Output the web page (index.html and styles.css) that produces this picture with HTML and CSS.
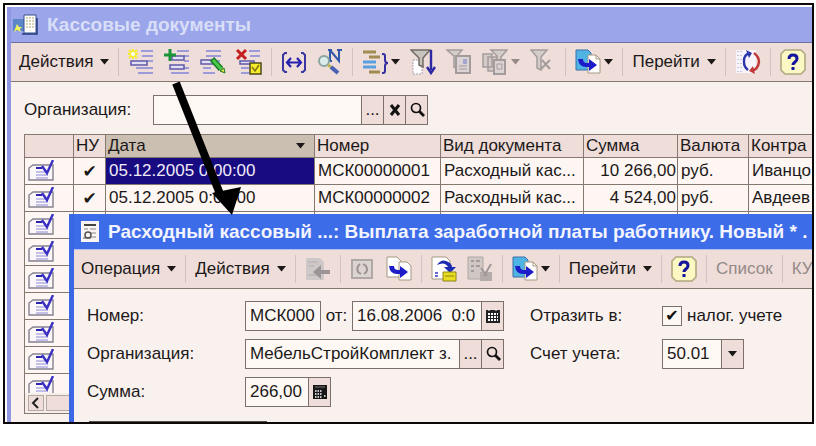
FILE: index.html
```html
<!DOCTYPE html>
<html lang="ru">
<head>
    <meta charset="UTF-8">
    <title>Кассовые документы</title>
    <link rel="stylesheet" href="styles.css">
</head>
<body>
<svg class="sprite">
    <symbol id="i-lines" viewBox="0 0 26 26">
        <path d="M13 2h12M14 7h11M8 19h17M10 24h15M19 12h6" stroke="#9c9ad8" stroke-width="2"/>
        <path d="M3 12h16v4H3z" fill="#e4e0f4" stroke="#5f5aa8" stroke-width="1.5"/>
    </symbol>
    <symbol id="i-row" viewBox="0 0 26 22">
        <path d="M5 5h20v15H1V8z" fill="#fbf6f8" stroke="#85818f" stroke-width="1.4"/>
        <path d="M8 12h12M8 15h12M8 18h12" stroke="#8d8bd8"/>
        <path d="M8 8h6" stroke="#2b23b4" stroke-width="2"/>
        <path d="M14 6l5 7 6-13" fill="none" stroke="#3a30c4" stroke-width="2.4"/>
    </symbol>
    <symbol id="i-go" viewBox="0 0 26 26">
        <path d="M1 1h12l3 3v17H1z" fill="#4fb4e4" stroke="#3c6ea8"/>
        <path d="M13 6h8l4 4v14H13z" fill="#fff" stroke="#a49a80"/>
        <path d="M21 6v4h4" fill="none" stroke="#a49a80"/>
        <path d="M3 10l5 0q0 4 4 4h2v-4l8 6-8 6v-4h-3q-7 0-8-8z" fill="#1c1cc8"/>
    </symbol>
    <symbol id="i-help" viewBox="0 0 26 26">
        <path d="M5 1h16l4 4v16l-4 4H5l-4-4V5z" fill="#fbf8c4" stroke="#b0a880" stroke-width="1.6"/>
        <path d="M9 10q0-4 4-4t4 3.500q0 2-2 3.500t-2 3" fill="none" stroke="#14149c" stroke-width="3"/>
        <path d="M11.500 18h3v3h-3z" fill="#14149c"/>
    </symbol>
    <symbol id="i-find" viewBox="0 0 16 16">
        <circle cx="7" cy="6" r="4.500" fill="none" stroke="#111" stroke-width="1.700"/>
        <path d="M10 9l5 5" stroke="#111" stroke-width="2.800"/>
    </symbol>
    <symbol id="i-down" viewBox="0 0 9 6">
        <path d="M0 0h9L4.500 5.500z" fill="currentColor"/>
    </symbol>
</svg>

<div class="frame">
    <div class="journal">
        <div class="title">
            <svg class="title-icon" viewBox="0 0 26 22">
                <path d="M0 5h12v12H0z" fill="#5c86c8"/>
                <path d="M4 10l2 3 3 0-2 2 1 3-4-2-3 2 1-3z" fill="#f0f060"/>
                <path d="M11 1h12v18H11z" fill="#fff" stroke="#34508c"/>
                <path d="M13 4h8M13 7h8M13 10h8M13 13h8" stroke="#b0a468" stroke-dasharray="2 1"/>
                <path d="M9 20h15V4" fill="none" stroke="#283c80" stroke-width="1.500"/>
            </svg>
            <h1>Кассовые документы</h1>
        </div>

        <div class="toolbar">
            <button class="menu">Действия<svg class="down"><use href="#i-down"/></svg></button>
            <span class="sep"></span>
            <button title="Добавить"><svg viewBox="0 0 26 26"><use href="#i-lines"/><path d="M5 0v10M0 5h10M1 1l8 8M9 1L1 9" stroke="#f4ec28" stroke-width="2"/><circle cx="5" cy="5" r="2" fill="#fff"/></svg></button>
            <button title="Скопировать"><svg viewBox="0 0 26 26"><path d="M13 2h12M20 12h5M7 24h18M20 7h5M20 19h5" stroke="#9c9ad8" stroke-width="2"/><path d="M8 7h12v4H8zM6 16h14v4H6z" fill="#e4e0f4" stroke="#5f5aa8" stroke-width="1.500"/><path d="M6 0v12M0 6h12" stroke="#1c9438" stroke-width="3"/></svg></button>
            <button title="Изменить"><svg viewBox="0 0 26 26"><path d="M6 2h15M6 7h15M3 19h8M3 24h12M14 12h6" stroke="#9c9ad8" stroke-width="2"/><path d="M1 11h13v4H1z" fill="#e4e0f4" stroke="#5f5aa8" stroke-width="1.500"/><path d="M12 10l9 10" stroke="#1c7c28" stroke-width="6"/><path d="M13 11l9 10" stroke="#4cc848" stroke-width="3"/><path d="M20 22l4-3 1 5z" fill="#e8e040" stroke="#1c7c28"/></svg></button>
            <button title="Пометить на удаление"><svg viewBox="0 0 26 26"><path d="M13 2h11M14 7h10M5 19h8M5 24h8" stroke="#9c9ad8" stroke-width="2"/><path d="M4 12h14v3H4z" fill="#e4e0f4" stroke="#5f5aa8" stroke-width="1.500"/><path d="M1 1l9 9M10 1l-9 9" stroke="#c42020" stroke-width="3"/><path d="M14 14h11v11H14z" fill="#f6ec28" stroke="#4c4818" stroke-width="1.500"/><path d="M16 18l3 4 4-6" fill="none" stroke="#807414" stroke-width="1.500"/></svg></button>
            <span class="sep"></span>
            <button title="Интервал"><svg viewBox="0 0 26 26"><path d="M6 4H4L2 6v15l2 2h2M20 4h2l2 2v15l-2 2h-2" fill="none" stroke="#3a38a0" stroke-width="2"/><path d="M7 13.500h12M10 9l-4 4.500 4 4.500M16 9l4 4.500-4 4.500" fill="none" stroke="#2420b0" stroke-width="2.200"/></svg></button>
            <button title="Найти по номеру"><svg viewBox="0 0 26 26"><path d="M13 12V1l9 11V1M11 1h4M20 1h5M11 12h4" fill="none" stroke="#3058a8" stroke-width="2"/><circle cx="7" cy="12" r="5" fill="#dcecec" stroke="#8ca4a0" stroke-width="2"/><path d="M11 16l3 2" stroke="#c0b454" stroke-width="3"/><path d="M14 18l7 6" stroke="#4860b4" stroke-width="4"/></svg></button>
            <span class="sep"></span>
            <button class="drop-menu" title="Отборы"><svg viewBox="0 0 26 26"><path d="M1 3h13M7 8h11M7 23h11" stroke="#a08c50" stroke-width="3"/><path d="M1 13h13M1 18h13" stroke="#58a0e0" stroke-width="3"/><path d="M20 5h1q2 0 2 2v4q0 3 3 3-3 0-3 3v5q0 2-2 2h-1" fill="none" stroke="#3430a0" stroke-width="2"/></svg><svg class="down"><use href="#i-down"/></svg></button>
            <button title="Отбор и сортировка"><svg viewBox="0 0 26 26"><path d="M3 11h9v14H3z" fill="#fff" stroke="#a8a0b8" stroke-dasharray="2 1"/><path d="M1 1h19l-7 8v9l-4-2V9z" fill="#c8c4bc" stroke="#706c64" stroke-width="1.500"/><path d="M21 1v20M17 18l4 6 4-6" fill="none" stroke="#2c28a4" stroke-width="2.400"/></svg></button>
            <button title="Отбор по значению"><svg viewBox="0 0 26 26"><path d="M1 1h15l-5 6v13l-3-2V7z" fill="#d4ccc8" stroke="#a49c9c" stroke-width="1.500"/><path d="M10 7h14v17H10z" fill="#dcd4d4" stroke="#a49c9c" stroke-width="2"/><path d="M13 17h8M13 20h8" stroke="#a49c9c"/><path d="M17 10h4v5h-4z" fill="#a4a4d0"/></svg></button>
            <button class="drop-menu off" title="История отборов"><svg viewBox="0 0 26 26"><path d="M1 5h9v13H1zM6 8h9v14H6z" fill="#d4ccc8" stroke="#a49c9c" stroke-width="1.500"/><path d="M9 1h16l-6 7v6l-4-2V7z" fill="#d4ccc8" stroke="#a49c9c" stroke-width="1.500"/><path d="M12 11h11v14H12z" fill="#dcd4d4" stroke="#a49c9c" stroke-width="2"/><path d="M15 15h5v5h-5z" fill="none" stroke="#a49c9c"/></svg><svg class="down"><use href="#i-down"/></svg></button>
            <button title="Отключить отбор"><svg viewBox="0 0 26 26"><path d="M1 1h16l-6 7v13l-4-2V8z" fill="#d4ccc8" stroke="#a49c9c" stroke-width="1.500"/><path d="M12 11l8 9M20 11l-9 9" stroke="#a49c9c" stroke-width="2"/></svg></button>
            <span class="sep"></span>
            <button class="drop-menu" title="Ввести на основании"><svg><use href="#i-go"/></svg><svg class="down"><use href="#i-down"/></svg></button>
            <span class="sep"></span>
            <button class="menu">Перейти<svg class="down"><use href="#i-down"/></svg></button>
            <span class="sep"></span>
            <button title="Обновить"><svg viewBox="0 0 26 26"><path d="M1 1h20v23H1z" fill="#f8f4fc"/><path d="M3 2v22M6 2v22" stroke="#9c98b0" stroke-dasharray="1 3"/><path d="M15 4q-7 2-6 9 0 5 4 8" fill="none" stroke="#2c38a8" stroke-width="2.400"/><path d="M11 1l6 3-3 5z" fill="#2c38a8"/><path d="M19 4q5 4 5 9-1 7-7 9" fill="none" stroke="#c03838" stroke-width="2.400"/><path d="M20 25l-6-3 4-5z" fill="#c03838"/></svg></button>
            <span class="sep"></span>
            <button title="Справка"><svg><use href="#i-help"/></svg></button>
        </div>

        <div class="filter">
            <label for="org-filter">Организация:</label>
            <div class="field field-filter">
                <input type="text" id="org-filter">
                <button title="Выбрать">...</button>
                <button title="Очистить"><svg viewBox="0 0 16 16"><path d="M4 3l8 10M12 3L4 13" stroke="#111" stroke-width="3"/></svg></button>
                <button title="Открыть"><svg><use href="#i-find"/></svg></button>
            </div>
        </div>

        <div class="list">
            <div class="list-rows">
                <table>
                    <colgroup>
                        <col class="c-icon"><col class="c-nu"><col class="c-date"><col class="c-num">
                        <col class="c-kind"><col class="c-sum"><col class="c-cur"><col class="c-who">
                    </colgroup>
                    <thead>
                    <tr>
                        <th></th>
                        <th>НУ</th>
                        <th class="sorted"><div>Дата<svg class="down"><use href="#i-down"/></svg></div></th>
                        <th>Номер</th>
                        <th>Вид документа</th>
                        <th>Сумма</th>
                        <th>Валюта</th>
                        <th>Контра</th>
                    </tr>
                    </thead>
                    <tbody>
                    <tr>
                        <td><svg class="row-icon"><use href="#i-row"/></svg></td>
                        <td class="tick">✔</td>
                        <td class="selected">05.12.2005 0:00:00</td>
                        <td>МСК00000001</td>
                        <td>Расходный кас...</td>
                        <td class="money">10 266,00</td>
                        <td>руб.</td>
                        <td>Иванцо</td>
                    </tr>
                    <tr>
                        <td><svg class="row-icon"><use href="#i-row"/></svg></td>
                        <td class="tick">✔</td>
                        <td>05.12.2005 0:00:00</td>
                        <td>МСК00000002</td>
                        <td>Расходный кас...</td>
                        <td class="money">4 524,00</td>
                        <td>руб.</td>
                        <td>Авдеев</td>
                    </tr>
                    <tr><td><svg class="row-icon"><use href="#i-row"/></svg></td><td></td><td></td><td></td><td></td><td></td><td></td><td></td></tr>
                    <tr><td><svg class="row-icon"><use href="#i-row"/></svg></td><td></td><td></td><td></td><td></td><td></td><td></td><td></td></tr>
                    <tr><td><svg class="row-icon"><use href="#i-row"/></svg></td><td></td><td></td><td></td><td></td><td></td><td></td><td></td></tr>
                    <tr><td><svg class="row-icon"><use href="#i-row"/></svg></td><td></td><td></td><td></td><td></td><td></td><td></td><td></td></tr>
                    <tr><td><svg class="row-icon"><use href="#i-row"/></svg></td><td></td><td></td><td></td><td></td><td></td><td></td><td></td></tr>
                    <tr><td><svg class="row-icon"><use href="#i-row"/></svg></td><td></td><td></td><td></td><td></td><td></td><td></td><td></td></tr>
                    <tr><td><svg class="row-icon"><use href="#i-row"/></svg></td><td></td><td></td><td></td><td></td><td></td><td></td><td></td></tr>
                    </tbody>
                </table>
            </div>
            <div class="scroll">
                <button title="Влево"><svg viewBox="0 0 14 14"><path d="M9 2L4 7l5 5" fill="none" stroke="#222" stroke-width="2"/></svg></button>
                <div class="thumb"></div>
            </div>
        </div>
    </div>

    <div class="order">
        <div class="title">
            <svg class="title-icon" viewBox="0 0 18 22">
                <path d="M0 0h18v21H0z" fill="#fbf4f4"/>
                <path d="M3 4h12" stroke="#444" stroke-width="2"/>
                <path d="M3 8h4M9 8h6M10 12h5M10 16h5" stroke="#888"/>
                <circle cx="7" cy="14" r="3" fill="none" stroke="#555" stroke-width="1.500"/>
                <path d="M2 17h8" stroke="#555"/>
            </svg>
            <h2>Расходный кассовый ...: Выплата заработной платы работнику. Новый * .</h2>
        </div>

        <div class="toolbar">
            <button class="menu">Операция<svg class="down"><use href="#i-down"/></svg></button>
            <span class="sep"></span>
            <button class="menu">Действия<svg class="down"><use href="#i-down"/></svg></button>
            <span class="sep"></span>
            <button title="Найти в списке"><svg viewBox="0 0 26 26"><path d="M1 2h14l4 4v18H1z" fill="#cfc8c8"/><path d="M3 6h10M3 10h6M3 19h12" stroke="#b4acac"/><path d="M25 14v4h-9v5l-8-7 8-7v5z" fill="#9c9496"/></svg></button>
            <span class="sep"></span>
            <button title="Перечитать"><svg viewBox="0 0 26 26"><path d="M2 4h20v18H2z" fill="#dcd4d0" stroke="#b0a8a4" stroke-width="2"/><path d="M10 8q-4 3-2 8l3 2M14 18q5-3 2-8l-3-2" fill="none" stroke="#9c9494" stroke-width="2"/></svg></button>
            <button title="Скопировать"><svg viewBox="0 0 26 26"><path d="M1 1h10l4 4v16H1z" fill="#fff" stroke="#a49a80"/><path d="M13 6h8l4 4v14H13z" fill="#fff" stroke="#a49a80"/><path d="M3 10l5 0q0 4 4 4h2v-4l8 6-8 6v-4h-3q-7 0-8-8z" fill="#1c1cc8"/></svg></button>
            <span class="sep"></span>
            <button title="Провести"><svg viewBox="0 0 26 26"><path d="M1 1h14l4 4v18H1z" fill="#fff" stroke="#a49a80"/><path d="M4 17h3M4 20h3" stroke="#6868d8" stroke-width="2"/><path d="M6 9q5-8 13-2 2 2 2 4h4l-6 6-6-6h4q-3-6-11-2z" fill="#1c2cb0"/><path d="M12 16h13v9H12z" fill="#e8dc20" stroke="#8c8418"/><path d="M14 20h9" stroke="#8c8418"/></svg></button>
            <button title="Отменить проведение"><svg viewBox="0 0 26 26"><path d="M1 1h15v22H1z" fill="#d0c8c4" stroke="#b0a8a4"/><path d="M4 5h3M9 5h4M4 10h3M4 15h3M9 10h4" stroke="#a49c9c" stroke-width="2"/><path d="M13 16h12v9H13z" fill="#b4acaa"/><path d="M24 8l-7 12M14 12l6 8" stroke="#a09898" stroke-width="2"/></svg></button>
            <span class="sep"></span>
            <button class="drop-menu" title="Ввести на основании"><svg><use href="#i-go"/></svg><svg class="down"><use href="#i-down"/></svg></button>
            <span class="sep"></span>
            <button class="menu">Перейти<svg class="down"><use href="#i-down"/></svg></button>
            <span class="sep"></span>
            <button title="Справка"><svg><use href="#i-help"/></svg></button>
            <span class="sep"></span>
            <button class="off">Список</button>
            <span class="sep"></span>
            <button class="off">КУ</button>
        </div>

        <form class="form">
            <label for="num">Номер:</label>
            <div class="pair">
                <div class="field field-num"><input type="text" id="num" value="МСК000"></div>
                <label for="date">от:</label>
                <div class="field field-date">
                    <input type="text" id="date" value="16.08.2006  0:0">
                    <button type="button" title="Календарь"><svg viewBox="0 0 16 16"><path d="M1 2h14v13H1z" fill="#222"/><path d="M3 6h10M3 9h10M3 12h10" stroke="#fff" stroke-width="2" stroke-dasharray="2 1"/><path d="M4 1v2M11 1v2" stroke="#fff"/></svg></button>
                </div>
            </div>
            <label for="nalog">Отразить в:</label>
            <div class="check"><input type="checkbox" id="nalog" checked><label for="nalog">налог. учете</label></div>

            <label for="org">Организация:</label>
            <div class="field">
                <input type="text" id="org" value="МебельСтройКомплект з.">
                <button type="button" title="Выбрать">...</button>
                <button type="button" title="Открыть"><svg><use href="#i-find"/></svg></button>
            </div>
            <label for="account">Счет учета:</label>
            <div class="field field-account">
                <select id="account"><option>50.01</option></select>
                <span class="drop"><svg class="down"><use href="#i-down"/></svg></span>
            </div>

            <label for="sum">Сумма:</label>
            <div class="field field-sum">
                <input type="text" id="sum" value="266,00">
                <button type="button" title="Калькулятор"><svg viewBox="0 0 16 16"><path d="M1 1h14v14H1z" fill="#181818"/><path d="M3 3h10" stroke="#777"/><path d="M3 7h7M3 10h7M3 13h7M12 12h2" stroke="#fff" stroke-width="1.500" stroke-dasharray="1.500 1"/></svg></button>
            </div>
        </form>
        <div class="tabs-edge"></div>
    </div>

    <!-- стрелка от кнопки "Скопировать" к новому документу -->
    <svg class="pointer" viewBox="0 0 70 136">
        <path d="M10 3L54 114" stroke="#000" stroke-width="8"/>
        <path d="M46 113l29-6-9 28z"/>
    </svg>
</div>
</body>
</html>
```
FILE: styles.css
```css
*{
    margin: 0;
    padding: 0;
    box-sizing: border-box;
}
body{
    background-color: #fff;
    padding: 3px 2px 0 3px;
    font: 17px/20px "Liberation Sans", Arial, sans-serif;
    color: #1c1818;
}
button, input, select{
    font: inherit;
    color: inherit;
    border: none;
    border-radius: 0;
    background: none;
}
.sprite{
    position: absolute;
    width: 0;
    height: 0;
}
.frame{
    position: relative;
    border: 2px solid #0c0808;
    overflow: hidden;
}

/* окно журнала */
.journal{
    border-left: 4px solid #8f98e0;
    margin: 2px 0 0 2px;
    padding-bottom: 8px;
    background-color: #f9f1ee;
}
.title{
    display: flex;
    align-items: center;
    height: 36px;
    background-color: #9ba6ea;
    border-bottom: 1px solid #6d70a4;
    overflow: hidden;
}
.title h1, .title h2{
    font-size: 19px;
    line-height: 22px;
    white-space: nowrap;
    color: #d9def8;
}
.title-icon{
    flex: none;
    width: 26px;
    height: 22px;
    margin: 0 8px 0 2px;
}
.toolbar{
    display: flex;
    align-items: center;
    gap: 9px;
    height: 39px;
    padding-left: 8px;
    background-color: #eeddd8;
    border-bottom: 1px solid #84786f;
    overflow: hidden;
}
.toolbar button{
    display: flex;
    align-items: center;
    flex: none;
    white-space: nowrap;
}
.toolbar button + button{
    margin-left: 1px;
}
.toolbar svg{
    width: 26px;
    height: 26px;
}
.toolbar .down, .down{
    flex: none;
    width: 9px;
    height: 6px;
}
.menu{
    gap: 7px;
}
.drop-menu{
    gap: 3px;
}
.off{
    color: #958a88;
}
.sep{
    flex: none;
    width: 1px;
    height: 28px;
    background-color: #d0c2bf;
}
.filter{
    display: flex;
    align-items: center;
    padding: 13px 13px 9px;
}
.filter label{
    width: 129px;
}

/* поле ввода с кнопками */
.field{
    display: flex;
    height: 30px;
    border: 1px solid #7c706c;
    background-color: #fdf8f4;
}
.field input{
    flex: 1;
    min-width: 0;
    padding-left: 4px;
    outline: none;
}
.field button, .drop{
    display: flex;
    align-items: center;
    justify-content: center;
    flex: none;
    width: 22px;
    border-left: 1px solid #7c706c;
    background-color: #eeddd8;
}
.field button svg{
    width: 16px;
    height: 16px;
}
.field-filter{
    width: 275px;
}

/* список документов */
.list{
    margin-left: 13px;
    border: 1px solid #84786f;
    border-right: none;
}
.list-rows{
    height: 258px;
    overflow: hidden;
    background-color: #fdf6f2;
}
table{
    width: 850px;
    table-layout: fixed;
    border-collapse: separate;
    border-spacing: 0;
}
.c-icon{ width: 49px; }
.c-nu{ width: 32px; }
.c-date{ width: 209px; }
.c-num{ width: 126px; }
.c-kind{ width: 143px; }
.c-sum{ width: 94px; }
.c-cur{ width: 71px; }
th, td{
    height: 27px;
    padding: 0 3px;
    border-right: 1px solid #84786f;
    border-bottom: 1px solid #84786f;
    font-weight: normal;
    text-align: left;
    white-space: nowrap;
    overflow: hidden;
}
th{
    height: 23px;
    padding: 0 2px;
    background-color: #eeddd8;
}
th.sorted{
    background-color: #cabfb0;
}
.sorted div{
    display: flex;
    align-items: center;
    justify-content: space-between;
    padding-right: 7px;
}
.row-icon{
    display: block;
    width: 26px;
    height: 22px;
}
.tick{
    font-family: "DejaVu Sans", sans-serif;
    text-align: center;
}
td.selected{
    background-color: #180a80;
    color: #f0ecf8;
}
td.money{
    padding-right: 1px;
    text-align: right;
}
.scroll{
    display: flex;
    gap: 2px;
    height: 20px;
    padding: 2px 3px;
    background-color: #f6ece8;
}
.scroll button{
    width: 16px;
    border: 1px solid #b4a8a0;
    background-color: #eeddd8;
}
.scroll svg{
    display: block;
    width: 14px;
    height: 14px;
}
.thumb{
    width: 400px;
    border: 1px solid #b4a8a0;
    background-color: #eeddd8;
}

/* окно ордера поверх журнала */
.order{
    position: absolute;
    left: 64px;
    right: 0;
    top: 209px;
    bottom: 0;
    border-left: 5px solid #3a68e4;
    background-color: #f9f1ee;
}
.order .title{
    background-color: #3c6ce8;
    border-bottom-color: #b4bcf0;
}
.order h2{
    color: #f4f4ff;
}
.order .title-icon{
    width: 18px;
    margin: 0 9px 0 7px;
}
.order .toolbar{
    padding-left: 7px;
}
.form{
    display: grid;
    grid-template-columns: 158px 259px 158px 1fr;
    gap: 8px 0;
    align-items: center;
    padding: 12px 0 14px 13px;
}
.form > label:nth-of-type(even){
    padding-left: 26px;
}
.pair{
    display: flex;
    align-items: center;
    justify-content: space-between;
}
.field-num{
    width: 76px;
}
.field-date{
    width: 152px;
}
.field-sum{
    width: 86px;
}
.field-account{
    position: relative;
    width: 82px;
}
.field-account select{
    width: 100%;
    padding-left: 4px;
    appearance: none;
    outline: none;
}
.drop{
    position: absolute;
    top: 0;
    right: 0;
    bottom: 0;
    pointer-events: none;
}
.check{
    display: flex;
    align-items: center;
    gap: 5px;
}
.check input{
    appearance: none;
    width: 20px;
    height: 20px;
    border: 1px solid #7c706c;
    background-color: #fdf8f4;
}
.check input:checked::before{
    content: "✔";
    display: block;
    font: 16px/18px "DejaVu Sans", sans-serif;
    text-align: center;
    color: #111;
}
.tabs-edge{
    width: 178px;
    height: 2px;
    margin-left: 15px;
    background-color: #584c48;
}

.pointer{
    position: absolute;
    left: 161px;
    top: 75px;
    width: 70px;
    height: 136px;
    overflow: visible;
}
```
